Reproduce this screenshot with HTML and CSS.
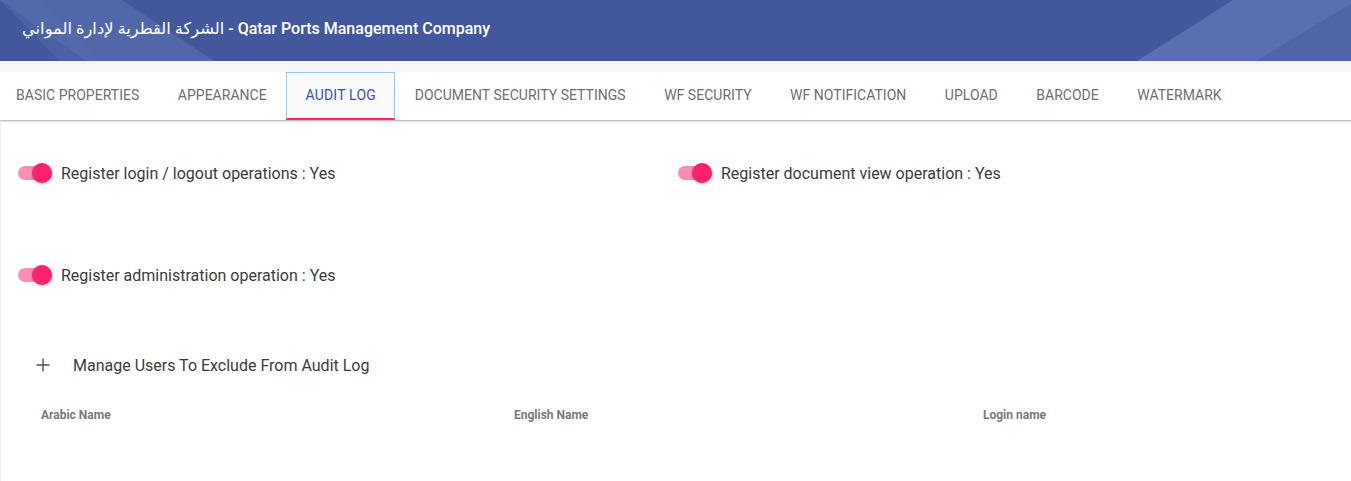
FILE: index.html
```html
<!DOCTYPE html>
<html lang="en">
<head>
<meta charset="utf-8">
<title>Audit Log</title>
<link rel="stylesheet" href="styles.css">
</head>
<body>
<header class="topbar">
  <svg class="topbar-bg" viewBox="0 0 1351 61" preserveAspectRatio="none" aria-hidden="true">
    <rect x="0" y="0" width="1351" height="61" fill="#43589c"/>
    <polygon points="0,0 122,0 214,61 86,61" fill="#5266aa"/>
    <polygon points="0,0 40,0 100,61 60,61" fill="#5569ad" opacity="0.5"/>
    <polygon points="1233,0 1351,0 1351,4 1257,61 1137,61" fill="#5a6eb2"/>
    <polygon points="1351,4 1351,61 1257,61" fill="#5064a8"/>
  </svg>
  <h1 class="title"><span class="title-ar" lang="ar">الشركة القطرية لإدارة الموان&#x64A;</span> - Qatar Ports Management Company</h1>
</header>
<div class="spacer"></div>
<nav class="tabs">
  <span class="tab tab-first">Basic Properties</span>
  <span class="tab">Appearance</span>
  <span class="tab active">Audit Log</span>
  <span class="tab">Document Security Settings</span>
  <span class="tab">WF Security</span>
  <span class="tab">WF Notification</span>
  <span class="tab">Upload</span>
  <span class="tab">Barcode</span>
  <span class="tab">Watermark</span>
</nav>
<main class="content">
  <div class="toggles">
    <label class="toggle-row"><span class="switch"><span class="track"></span><span class="thumb"></span></span><span class="toggle-label">Register login / logout operations : Yes</span></label>
    <label class="toggle-row"><span class="switch"><span class="track"></span><span class="thumb"></span></span><span class="toggle-label">Register document view operation : Yes</span></label>
    <label class="toggle-row"><span class="switch"><span class="track"></span><span class="thumb"></span></span><span class="toggle-label">Register administration operation : Yes</span></label>
  </div>
  <div class="manage">
    <svg class="plus" viewBox="0 0 14 14" aria-hidden="true"><path d="M7 0.5v13M0.5 7h13" stroke="#555" stroke-width="1.4" fill="none"/></svg>
    <span class="manage-text">Manage Users To Exclude From Audit Log</span>
  </div>
  <div class="table-head">
    <span class="col col-ar">Arabic Name</span>
    <span class="col col-en">English Name</span>
    <span class="col col-login">Login name</span>
  </div>
</main>
</body>
</html>
```
FILE: styles.css
```css
html, body {
  margin: 0;
  padding: 0;
  background: #ffffff;
  font-family: Roboto, "Liberation Sans", "DejaVu Sans", sans-serif;
  overflow: hidden;
}

.topbar {
  position: relative;
  height: 61px;
  display: flex;
  align-items: center;
  overflow: hidden;
}

.topbar-bg {
  position: absolute;
  left: 0;
  top: 0;
  width: 100%;
  height: 100%;
}

.title {
  position: relative;
  margin: 0 0 4px 22px;
  font-size: 16px;
  font-weight: 500;
  color: #ffffff;
  font-family: Roboto, "DejaVu Sans", sans-serif;
  letter-spacing: 0;
}

.title-ar {
  font-size: 16.3px;
}

.spacer {
  height: 11px;
  background: #f7f7f7;
}

.tabs {
  display: flex;
  height: 48px;
  border-bottom: 1px solid #c4c4c4;
  box-shadow: 0 1px 1px rgba(0,0,0,0.12);
  background: #ffffff;
}

.tab {
  display: flex;
  align-items: center;
  padding: 0 19.25px 2px;
  font-size: 14px;
  font-weight: 400;
  text-transform: uppercase;
  color: #6f6f6f;
  box-sizing: border-box;
  height: 48px;
  white-space: nowrap;
  letter-spacing: 0.02px;
}

.tab-first {
  padding-left: 16px;
}

.tab.active {
  color: #3f51b5;
  background: #fafafa;
  border: 1px solid #90c8f8;
  border-bottom: 2px solid #f0286e;
  padding: 0 18.5px 1px 18.5px;
  letter-spacing: 0.2px;
}

.content {
  padding: 0 0 0 17px;
  border-left: 1px solid #f0f0f0;
  min-height: 360px;
}

.toggles {
  display: grid;
  grid-template-columns: 660px 1fr;
  row-gap: 78px;
  padding-top: 40px;
}

.toggle-row {
  display: flex;
  align-items: center;
  height: 24px;
}

.switch {
  position: relative;
  width: 36px;
  height: 24px;
  margin-right: 7px;
  flex: none;
}

.track {
  position: absolute;
  left: 0;
  top: 5px;
  width: 34px;
  height: 14px;
  border-radius: 7px;
  background: #ff8db4;
}

.thumb {
  position: absolute;
  left: 14px;
  top: 2px;
  width: 20px;
  height: 20px;
  border-radius: 50%;
  background: #ff2170;
  box-shadow: 0 1px 3px rgba(0,0,0,0.3);
}

.toggle-label {
  font-size: 16px;
  color: #3c3c3c;
}

.manage {
  display: flex;
  align-items: center;
  margin-top: 66px;
  padding-left: 18px;
  height: 24px;
}

.plus {
  width: 14px;
  height: 14px;
  margin-right: 23px;
}

.manage-text {
  font-size: 16px;
  color: #3c3c3c;
}

.table-head {
  display: flex;
  margin-top: 31px;
  padding-left: 23px;
  font-size: 12px;
  font-weight: 700;
  color: #7a7a7a;
}

.col-ar { width: 473px; }
.col-en { width: 469px; }
.col-login { width: auto; }
```
